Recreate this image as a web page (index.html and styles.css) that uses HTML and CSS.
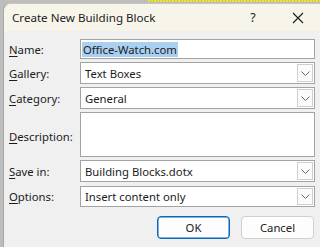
FILE: index.html
```html
<!DOCTYPE html>
<html>
<head>
<meta charset="utf-8">
<link rel="stylesheet" href="styles.css">
</head>
<body>
<div class="focus-strip"></div>
<div class="window">
  <div class="titlebar">
    <span class="title">Create New Building Block</span>
    <span class="help">?</span>
    <span class="close"><svg width="12" height="12" viewBox="0 0 12 12"><path d="M1 1 L11 11 M11 1 L1 11" stroke="#1a1a1a" stroke-width="1.1" fill="none"/></svg></span>
  </div>
  <div class="form">
    <label class="lbl"><u>N</u>ame:</label>
    <div class="field"><span class="sel">Office-Watch.com</span></div>

    <label class="lbl"><u>G</u>allery:</label>
    <div class="field combo"><span class="val">Text Boxes</span><span class="drop"><svg width="9" height="5" viewBox="0 0 9 5"><path d="M0.5 0.5 L4.5 4.5 L8.5 0.5" stroke="#6b6b6b" stroke-width="1" fill="none"/></svg></span></div>

    <label class="lbl"><u>C</u>ategory:</label>
    <div class="field combo"><span class="val">General</span><span class="drop"><svg width="9" height="5" viewBox="0 0 9 5"><path d="M0.5 0.5 L4.5 4.5 L8.5 0.5" stroke="#6b6b6b" stroke-width="1" fill="none"/></svg></span></div>

    <label class="lbl desc"><u>D</u>escription:</label>
    <div class="field area"></div>

    <label class="lbl"><u>S</u>ave in:</label>
    <div class="field combo"><span class="val">Building Blocks.dotx</span><span class="drop"><svg width="9" height="5" viewBox="0 0 9 5"><path d="M0.5 0.5 L4.5 4.5 L8.5 0.5" stroke="#6b6b6b" stroke-width="1" fill="none"/></svg></span></div>

    <label class="lbl opt"><u>O</u>ptions:</label>
    <div class="field combo opt"><span class="val">Insert content only</span><span class="drop"><svg width="9" height="5" viewBox="0 0 9 5"><path d="M0.5 0.5 L4.5 4.5 L8.5 0.5" stroke="#6b6b6b" stroke-width="1" fill="none"/></svg></span></div>
  </div>
  <div class="buttons">
    <button class="btn primary">OK</button>
    <button class="btn">Cancel</button>
  </div>
</div>
</body>
</html>
```

FILE: styles.css
```css
html, body {
  margin: 0;
  padding: 0;
  width: 320px;
  height: 247px;
  overflow: hidden;
  background: #bdbdbd;
  font-family: "Noto Sans", "Open Sans", sans-serif;
  font-size: 11.3px;
  color: #1c1c1c;
}

.focus-strip {
  position: absolute;
  left: 148px;
  top: 0;
  width: 172px;
  height: 2px;
  background: repeating-linear-gradient(90deg, #e8e23a 0 2px, #c9c55a 2px 3px);
}

.window {
  margin: 3px 0 0 3px;
  height: 244px;
  background: #f0f0f0;
  border-left: 1px solid #a8a8a8;
  border-top: 1px solid #c8c6bd;
  border-top-left-radius: 8px;
  overflow: hidden;
  box-sizing: border-box;
}

.titlebar {
  height: 27px;
  background: #f7f4ea;
  display: flex;
  align-items: center;
  padding-left: 8px;
}

.title {
  flex: 1;
  font-size: 11.6px;
}

.help {
  width: 10px;
  margin-right: 34px;
  font-size: 12.5px;
  text-align: center;
}

.close {
  width: 12px;
  height: 12px;
  margin-right: 16px;
  display: flex;
}

.form {
  display: grid;
  grid-template-columns: 71px 235px;
  grid-template-rows: 20px 22px 22px 45px 22px 22px;
  row-gap: 3px;
  padding: 8px 0 0 5px;
}

.lbl {
  display: flex;
  align-items: center;
  white-space: nowrap;
}

.lbl u {
  text-decoration-thickness: 1px;
  text-underline-offset: 2px;
}

.desc {
  padding-top: 3px;
}

.opt {
  margin-top: 1px;
}

.field {
  background: #ffffff;
  border: 1px solid #a3a3a3;
  box-sizing: border-box;
  display: flex;
  align-items: center;
  padding-left: 1px;
  white-space: nowrap;
}

.sel {
  background: #a9d0f1;
  padding: 0 1px;
  line-height: 15px;
}

.val {
  flex: 1;
  padding-left: 3px;
}

.drop {
  width: 16px;
  align-self: stretch;
  margin: 1px;
  background: #fbfbfb;
  border: 1px solid #cfcfcf;
  box-sizing: border-box;
  display: flex;
  align-items: center;
  justify-content: center;
}

.buttons {
  display: flex;
  justify-content: flex-end;
  gap: 11px;
  padding-right: 6px;
  margin-top: 9px;
}

.btn {
  width: 73px;
  height: 23px;
  font-family: "Noto Sans", "Open Sans", sans-serif;
  font-size: 11.3px;
  color: #1c1c1c;
  background: #fdfdfd;
  border: 1px solid #d0d0d0;
  border-radius: 4px;
  padding: 0;
}

.btn.primary {
  border: 1px solid #0a67c0;
  box-shadow: inset 0 0 0 0.5px #0a67c0;
}
```
